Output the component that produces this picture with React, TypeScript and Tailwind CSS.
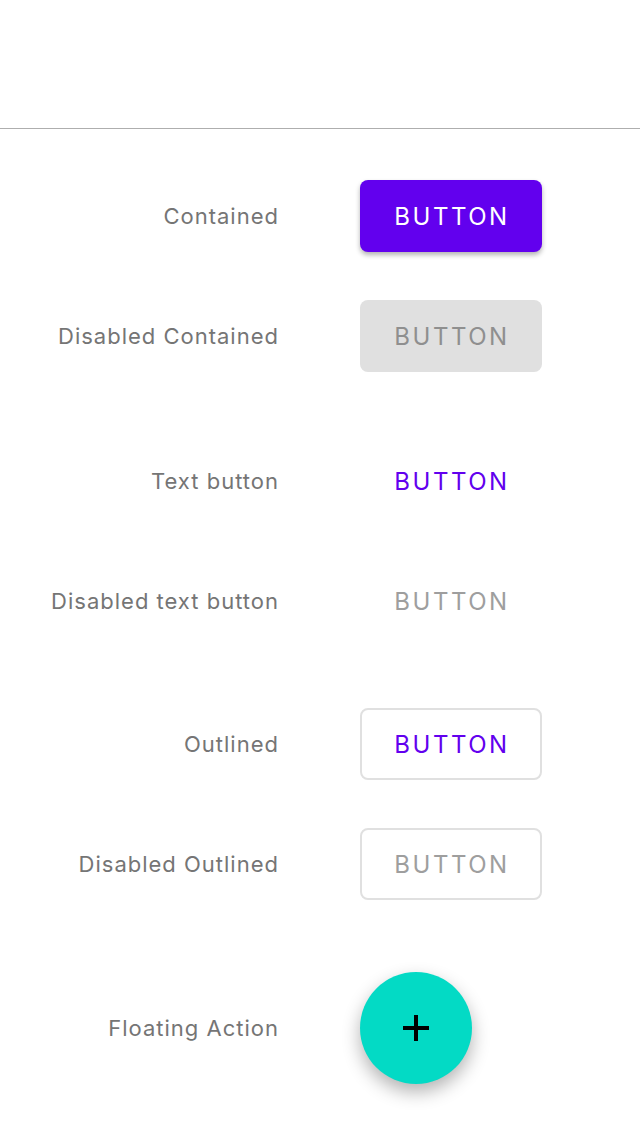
import React from "react";

const Row = ({ label, children, className = "" }: { label: string; children: React.ReactNode; className?: string }) => {
  return (
    <div className={"flex items-center " + className}>
      <div className="w-[320px] pr-[41px] text-right text-[22px] tracking-[1px] text-[#757575]">{label}</div>
      <div className="pl-[40px] flex items-center">{children}</div>
    </div>
  );
};

const btnBase =
  "w-[182px] h-[72px] rounded-lg flex items-center justify-center pt-px pl-[2px] text-[24px] font-normal tracking-[2.5px]";

const App = () => {
  return (
    <div className="w-[640px] h-[1136px] bg-white font-['Inter',sans-serif] overflow-hidden">
      <div className="h-[128px]" />
      <div className="h-px bg-[#aeaeae]" />

      <Row label="Contained" className="mt-[51px]">
        <button className={btnBase + " bg-[#6200ee] text-white shadow-[0_3px_5px_rgba(0,0,0,0.3)]"}>BUTTON</button>
      </Row>
      <Row label="Disabled Contained" className="mt-[48px]">
        <button className={btnBase + " bg-[#e0e0e0] text-[#8f8f8f]"}>BUTTON</button>
      </Row>

      <Row label="Text button" className="mt-[73px]">
        <button className={btnBase + " text-[#6200ee]"}>BUTTON</button>
      </Row>
      <Row label="Disabled text button" className="mt-[48px]">
        <button className={btnBase + " text-[#9e9e9e]"}>BUTTON</button>
      </Row>

      <Row label="Outlined" className="mt-[71px]">
        <button className={btnBase + " border-2 border-[#e0e0e0] text-[#6200ee]"}>BUTTON</button>
      </Row>
      <Row label="Disabled Outlined" className="mt-[48px]">
        <button className={btnBase + " border-2 border-[#e0e0e0] text-[#9e9e9e]"}>BUTTON</button>
      </Row>

      <Row label="Floating Action" className="mt-[72px]">
        <button className="w-[112px] h-[112px] rounded-full bg-[#03dac5] flex items-center justify-center shadow-[0_8px_18px_rgba(0,0,0,0.3)]">
          <svg width="30" height="30" viewBox="0 0 30 30">
            <path d="M15 2v26M2 15h26" stroke="#000" strokeWidth="4" />
          </svg>
        </button>
      </Row>
    </div>
  );
};

export default App;
